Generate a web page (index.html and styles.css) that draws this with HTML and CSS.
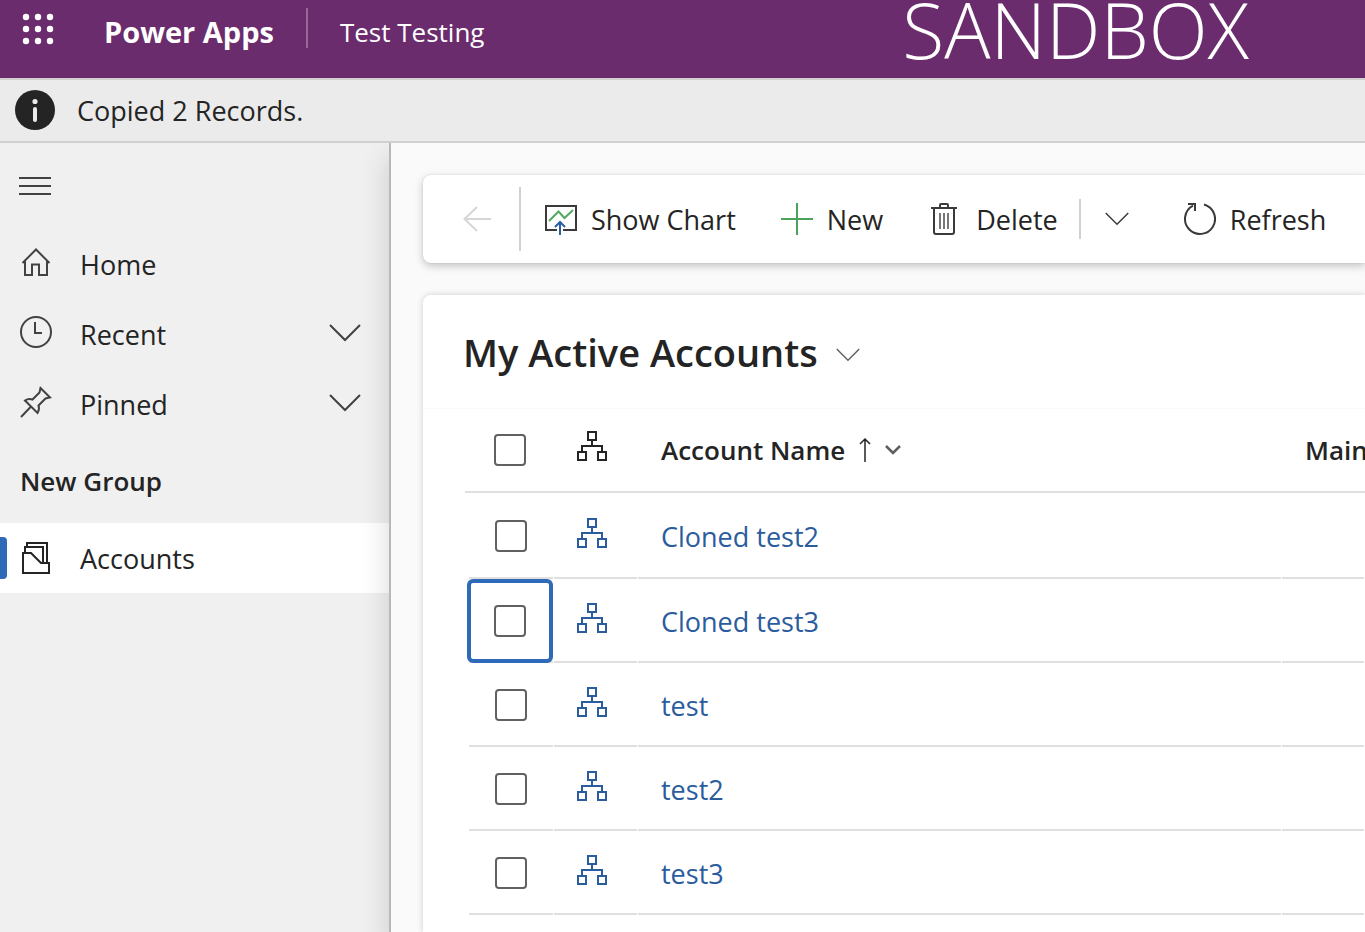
FILE: index.html
```html
<!DOCTYPE html>
<html lang="en">
<head>
<meta charset="utf-8">
<title>Power Apps</title>
<link rel="stylesheet" href="styles.css">
</head>
<body>
<svg class="sprite" aria-hidden="true">
  <symbol id="hierarchy" viewBox="0 0 30 30">
    <path d="M11 1h8v8h-8zM1 21h8v8H1zM21 21h8v8h-8zM15 9v6M5 21v-6h20v6" fill="none" stroke="currentColor" stroke-width="2"/>
  </symbol>
  <symbol id="chevron" viewBox="0 0 32 18">
    <path d="M1 1l15 15L31 1" fill="none" stroke="currentColor" stroke-width="2"/>
  </symbol>
</svg>
<div class="app">
  <header class="topbar">
    <button class="waffle" aria-label="App launcher">
      <svg width="32" height="32" viewBox="0 0 32 32" fill="currentColor"><circle cx="4" cy="4" r="3.2"/><circle cx="16" cy="4" r="3.2"/><circle cx="28" cy="4" r="3.2"/><circle cx="4" cy="16" r="3.2"/><circle cx="16" cy="16" r="3.2"/><circle cx="28" cy="16" r="3.2"/><circle cx="4" cy="28" r="3.2"/><circle cx="16" cy="28" r="3.2"/><circle cx="28" cy="28" r="3.2"/></svg>
    </button>
    <a class="brand" href="#">Power Apps</a>
    <span class="topbar-divider"></span>
    <a class="app-name" href="#">Test Testing</a>
    <span class="environment">SANDBOX</span>
  </header>
  <div class="notice" role="status">
    <svg width="40" height="40" viewBox="0 0 40 40"><circle cx="20" cy="20" r="20" fill="#242424"/><circle cx="20" cy="11.500" r="2.600" fill="#ebebeb"/><rect x="18" y="17" width="4" height="15" rx="2" fill="#ebebeb"/></svg>
    <span>Copied 2 Records.</span>
  </div>
  <div class="body">
    <nav class="sidebar">
      <button class="menu" aria-label="Site map">
        <svg width="32" height="18" viewBox="0 0 32 18"><path d="M0 1h32M0 9h32M0 17h32" stroke="currentColor" stroke-width="2"/></svg>
      </button>
      <a class="nav-item" href="#">
        <svg class="nav-icon" viewBox="0 0 32 32"><path d="M2.500 17L16 3.500 29.500 17M5 15v14h7V18.500h7V29h8V15" class="line"/></svg>
        <span>Home</span>
      </a>
      <button class="nav-item">
        <svg class="nav-icon" viewBox="0 0 32 32"><circle cx="16" cy="16" r="15" class="line"/><path d="M15 6v11h7" class="line"/></svg>
        <span>Recent</span>
        <svg class="nav-chevron"><use href="#chevron"/></svg>
      </button>
      <button class="nav-item">
        <svg class="nav-icon" viewBox="0 0 32 32"><path d="M1 31l10.500-11M20.500 2L30 11.500 25.500 12.500 18.500 19.500C19.500 22 19 24.500 17.500 27L5 14.500C7.500 12.700 10 12.500 12.500 13.500L19.500 6.500z" class="line"/></svg>
        <span>Pinned</span>
        <svg class="nav-chevron"><use href="#chevron"/></svg>
      </button>
      <h2 class="nav-group">New Group</h2>
      <a class="nav-item selected" href="#" aria-current="page">
        <svg class="nav-icon" viewBox="0 0 32 32"><path d="M3 11h8l10 10h8v10H3zM5 11V5h18v16M7 5V1h20v20" class="line"/></svg>
        <span>Accounts</span>
      </a>
    </nav>
    <main class="main">
      <div class="toolbar" role="toolbar">
        <button class="back" aria-label="Back" disabled>
          <svg width="28" height="26" viewBox="0 0 28 26"><path d="M28 13H1M14 1L1.500 13 14 25" fill="none" stroke="currentColor" stroke-width="2"/></svg>
        </button>
        <span class="rule tall"></span>
        <button class="command chart">
          <svg width="32" height="32" viewBox="0 0 32 32" fill="none" stroke-width="2"><path d="M12 27H1V3h30v24H18" stroke="#3b3a39"/><path d="M4 18l9.500-9.500 6 6.500L28 7" stroke="#55a860"/><path d="M15 32V19M10 24l5-5 5 5" stroke="#2a5fa8"/></svg>
          <span>Show Chart</span>
        </button>
        <button class="command new">
          <svg width="32" height="32" viewBox="0 0 32 32"><path d="M16 0v32M0 16h32" stroke="#4ba35a" stroke-width="2"/></svg>
          <span>New</span>
        </button>
        <button class="command delete">
          <svg width="32" height="32" viewBox="0 0 32 32" fill="none" stroke="currentColor" stroke-width="2"><path d="M3 5h26M6 5v24q0 2 2 2h16q2 0 2-2V5M12 5V2q0-1 1-1h6q1 0 1 1v3"/><path d="M12 10v16M16 10v16M20 10v16" stroke="#797775"/></svg>
          <span>Delete</span>
        </button>
        <span class="rule"></span>
        <button class="more" aria-label="More commands">
          <svg width="24" height="14"><use href="#chevron"/></svg>
        </button>
        <button class="command refresh">
          <svg width="32" height="32" viewBox="0 0 32 32" fill="none" stroke="currentColor" stroke-width="2"><path d="M20 1.500A15 15 0 1 1 9 2.700"/><path d="M4 1h7v7"/></svg>
          <span>Refresh</span>
        </button>
      </div>
      <section class="grid-card">
        <h1 class="view-title"><button><span>My Active Accounts</span> <svg width="24" height="14"><use href="#chevron"/></svg></button></h1>
        <table class="grid">
          <colgroup><col class="col-check"><col class="col-icon"><col><col class="col-phone"></colgroup>
          <thead>
            <tr>
              <th><input type="checkbox" aria-label="Select all"></th>
              <th><svg class="tree" role="img" aria-label="Hierarchy"><use href="#hierarchy"/></svg></th>
              <th><button class="sort">Account Name
                <svg width="12" height="26" viewBox="0 0 12 26"><path d="M6 25V2M1 7l5-5 5 5" fill="none" stroke="currentColor" stroke-width="1.500"/></svg>
                <svg width="16" height="10" viewBox="0 0 16 10"><path d="M1 1l7 7 7-7" fill="none" stroke="#605e5c" stroke-width="2.500"/></svg></button></th>
              <th>Main Phone</th>
            </tr>
          </thead>
          <tbody>
            <tr><td><input type="checkbox" aria-label="Select Cloned test2"></td><td><svg class="tree"><use href="#hierarchy"/></svg></td><td><a href="#">Cloned test2</a></td><td></td></tr>
            <tr><td class="focused"><input type="checkbox" aria-label="Select Cloned test3"></td><td><svg class="tree"><use href="#hierarchy"/></svg></td><td><a href="#">Cloned test3</a></td><td></td></tr>
            <tr><td><input type="checkbox" aria-label="Select test"></td><td><svg class="tree"><use href="#hierarchy"/></svg></td><td><a href="#">test</a></td><td></td></tr>
            <tr><td><input type="checkbox" aria-label="Select test2"></td><td><svg class="tree"><use href="#hierarchy"/></svg></td><td><a href="#">test2</a></td><td></td></tr>
            <tr><td><input type="checkbox" aria-label="Select test3"></td><td><svg class="tree"><use href="#hierarchy"/></svg></td><td><a href="#">test3</a></td><td></td></tr>
          </tbody>
        </table>
      </section>
    </main>
  </div>
</div>
</body>
</html>
```
FILE: styles.css
```css
* { box-sizing: border-box; }

body {
  margin: 0;
  font-family: "Open Sans", "Noto Sans", sans-serif;
  font-size: 27px;
  line-height: 36px;
  color: #242424;
  background: #fafafa;
}

button {
  margin: 0;
  padding: 0;
  border: 0;
  background: none;
  color: inherit;
  font: inherit;
  text-align: left;
}

a { color: inherit; text-decoration: none; }
svg { display: block; flex: none; }
.sprite { position: absolute; width: 0; height: 0; }
.line { fill: none; stroke: currentColor; stroke-width: 2; }

.app {
  display: flex;
  flex-direction: column;
  height: 100vh;
  overflow: hidden;
}

/* Top bar */
.topbar {
  display: flex;
  align-items: flex-start;
  flex: none;
  height: 78px;
  padding-left: 22px;
  background: #6b2c6e;
  color: #fff;
}
.waffle { margin-top: 13px; }
.brand {
  margin: 14px 32px 0 50px;
  font-size: 29px;
  font-weight: 700;
}
.topbar-divider {
  width: 2px;
  height: 40px;
  margin-top: 8px;
  background: #97699a;
}
.app-name { margin: 14px 0 0 32px; font-size: 26px; }
.environment {
  margin: 0 116px 0 auto;
  font-size: 77px;
  font-weight: 300;
  line-height: 60px;
}

/* Notification */
.notice {
  position: relative;
  z-index: 2;
  display: flex;
  flex: none;
  align-items: center;
  gap: 22px;
  height: 65px;
  padding: 0 15px 2px;
  border: solid #d0d0ce;
  border-width: 2px 0;
  background: #ebebeb;
}
.notice span, .command span, .nav-item span { padding-top: 2px; }

.body { display: flex; flex: 1; min-height: 0; }

/* Site map */
.sidebar {
  flex: none;
  width: 389px;
  background: #f0f0f0;
}
.menu {
  display: flex;
  align-items: center;
  width: 100%;
  height: 86px;
  padding-left: 19px;
  color: #424242;
}
.nav-item {
  position: relative;
  display: flex;
  align-items: center;
  width: 100%;
  height: 70px;
  padding: 0 28px 0 20px;
}
.nav-icon {
  width: 32px;
  height: 32px;
  margin: 0 28px 4px 0;
  color: #424242;
}
.nav-chevron {
  width: 32px;
  height: 18px;
  margin: 0 0 2px auto;
  color: #424242;
}
.nav-group {
  margin: 0;
  padding: 24px 20px;
  font-size: 26px;
  font-weight: 600;
}
.selected { background: #fff; }
.selected .nav-icon { margin-bottom: 0; color: #242424; }
.selected::before {
  content: "";
  position: absolute;
  top: 14px;
  left: 0;
  width: 7px;
  height: 42px;
  border-radius: 0 4px 4px 0;
  background: #2f6ab8;
}

/* Content */
.main {
  position: relative;
  z-index: 1;
  display: flex;
  flex: 1;
  flex-direction: column;
  gap: 32px;
  min-width: 0;
  padding: 32px 0 0 32px;
  border-left: 2px solid #b8b8b8;
  background: #fafafa;
  box-shadow: 0 14px 28px rgba(0, 0, 0, 0.16);
}
.toolbar {
  display: flex;
  flex: none;
  align-items: center;
  height: 88px;
  padding-left: 40px;
  border-radius: 8px 0 0 8px;
  background: #fff;
  box-shadow: 0 3px 8px rgba(0, 0, 0, 0.22), 0 0 2px rgba(0, 0, 0, 0.12);
  white-space: nowrap;
}
.back { margin-right: 28px; color: #d6d6d6; }
.rule { width: 2px; height: 40px; background: #d1d1d1; }
.rule.tall { height: 64px; }
.command {
  display: flex;
  align-items: center;
  gap: 14px;
  color: #242424;
}
.command svg, .more { color: #3b3a39; }
.chart { margin-left: 24px; }
.new { margin-left: 45px; }
.delete { gap: 16px; margin: 0 21px 0 45px; }
.more { margin: 0 55px 0 24px; }

.grid-card {
  flex: 1;
  padding-left: 42px;
  border-radius: 8px 0 0 0;
  background: #fff;
  box-shadow: 0 0 6px rgba(0, 0, 0, 0.18);
}
.view-title {
  margin: 0 0 0 -42px;
  padding: 33px 40px 32px;
  border-bottom: 1px solid #fafafa;
  font-size: 38px;
  font-weight: 600;
  line-height: 48px;
}
.view-title button { display: flex; align-items: center; gap: 18px; }
.view-title svg { margin-top: 6px; color: #616161; }

/* Records */
.grid {
  width: 100%;
  table-layout: fixed;
  border-collapse: separate;
  border-spacing: 0;
}
.col-check { width: 89px; }
.col-icon { width: 84px; }
.col-phone { width: 83px; }
.grid th, .grid td {
  height: 84px;
  padding: 0 0 0 23px;
  overflow: hidden;
  text-align: left;
  vertical-align: middle;
  white-space: nowrap;
}
.grid th {
  border-bottom: 2px solid #e0e0e0;
  font-size: 26px;
  font-weight: 600;
}
.grid td {
  padding-top: 2px;
  background: linear-gradient(#e0e0e0, #e0e0e0) 0 100% / calc(100% - 1px) 2px no-repeat;
  color: #2b5c9e;
}
.grid th:first-child { padding-left: 29px; }
.grid td:first-child {
  padding-top: 0;
  padding-left: 30px;
  background-position: 4px 100%;
  background-size: calc(100% - 5px) 2px;
}
.grid tbody tr:first-child td { height: 86px; }
.grid input {
  display: block;
  appearance: none;
  width: 32px;
  height: 32px;
  margin: 0;
  border: 2px solid #616161;
  border-radius: 4px;
  background: #fff;
}
.tree { width: 30px; height: 30px; margin-bottom: 8px; }
.sort { display: flex; align-items: center; gap: 14px; }
.grid td.focused { position: relative; padding-left: 29px; }
.focused::after {
  content: "";
  position: absolute;
  inset: 0 1px 0 2px;
  border: 4px solid #2f6ab8;
  border-radius: 6px;
  pointer-events: none;
}
```
